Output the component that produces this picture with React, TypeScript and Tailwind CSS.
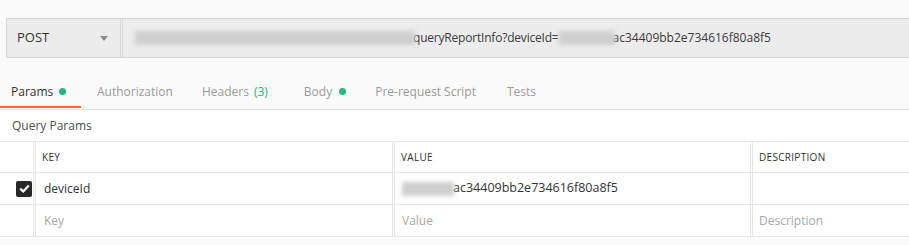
import React from "react";

const Blur = ({ w, className = "" }: { w: number; className?: string }) => (
  <span
    className={"inline-block h-[14px] bg-[#cfcfcf] blur-[2px] align-middle " + className}
    style={{ width: w }}
  />
);

export default function App() {
  return (
    <div
      className="w-[909px] h-[245px] overflow-hidden bg-[#fafafa] text-[#333]"
      style={{ fontFamily: '"Open Sans", "Noto Sans", sans-serif' }}
    >
      {/* URL bar */}
      <div className="pt-[18px] pl-[6px]">
        <div className="flex h-[40px] border border-[#d6d6d6] border-r-0 bg-[#ececec] rounded-l-[2px]">
          <div className="flex w-[116px] items-center justify-between border-r-[3px] border-double border-[#d8d8d8] pl-[10px] pr-[12px] text-[13px] text-[#333]">
            <span>POST</span>
            <svg width="8" height="5" viewBox="0 0 8 5">
              <path d="M0 0 L8 0 L4 5 Z" fill="#8a8a8a" />
            </svg>
          </div>
          <div className="flex flex-1 items-center pl-[12px] text-[12px] text-[#3a3a3a] whitespace-nowrap">
            <Blur w={280} />
            <span className="ml-[-2px] tracking-[-0.2px]">queryReportInfo?deviceId=</span>
            <Blur w={56} />
            <span className="ml-[-2px]">ac34409bb2e734616f80a8f5</span>
          </div>
        </div>
      </div>

      {/* Tabs */}
      <div className="mt-[15px] flex h-[37px] items-stretch border-b border-[#e3e3e3] pt-[1px] text-[12px] text-[#9a9a9a]">
        <div className="relative flex w-[82px] items-center pl-[11px] text-[#333]">
          Params
          <span className="ml-[6px] h-[7px] w-[7px] rounded-full bg-[#26b47f]" />
          <span className="absolute bottom-[1px] left-0 h-[2px] w-[81px] bg-[#f26b3a]" />
        </div>
        <div className="flex items-center pl-[15px]">Authorization</div>
        <div className="flex items-center pl-[29px]">
          Headers <span className="ml-[5px] text-[#26b47f]">(3)</span>
        </div>
        <div className="flex items-center pl-[36px]">
          Body
          <span className="ml-[7px] h-[7px] w-[7px] rounded-full bg-[#26b47f]" />
        </div>
        <div className="flex items-center pl-[29px]">Pre-request Script</div>
        <div className="flex items-center pl-[31px]">Tests</div>
      </div>

      {/* Query Params */}
      <div className="flex h-[32px] items-center border-b border-[#e8e8e8] bg-white pl-[12px] text-[12px] text-[#505050]">
        Query Params
      </div>

      {/* Table */}
      <div className="bg-white text-[12px]">
        <div className="flex h-[31px] border-b border-[#e8e8e8] text-[10px] tracking-[0.3px] text-[#333]">
          <div className="w-[36px] border-r-[3px] border-double border-[#e4e4e4]" />
          <div className="flex w-[359px] items-center border-r-[3px] border-double border-[#e4e4e4] pl-[6px]">KEY</div>
          <div className="flex w-[358px] items-center border-r-[3px] border-double border-[#e4e4e4] pl-[6px]">VALUE</div>
          <div className="flex flex-1 items-center pl-[6px]">DESCRIPTION</div>
        </div>
        <div className="flex h-[32px] border-b border-[#e8e8e8] text-[#333]">
          <div className="flex w-[36px] items-center border-r-[3px] border-double border-[#e4e4e4] pl-[16px]">
            <span className="flex h-[16px] w-[16px] items-center justify-center rounded-[2px] bg-[#282828]">
              <svg width="11" height="9" viewBox="0 0 11 9">
                <path d="M1.2 4.6 L4.2 7.4 L9.8 1.4" fill="none" stroke="#fff" strokeWidth="2.2" />
              </svg>
            </span>
          </div>
          <div className="flex w-[359px] items-center border-r-[3px] border-double border-[#e4e4e4] pl-[8px]">deviceId</div>
          <div className="flex w-[358px] items-center border-r-[3px] border-double border-[#e4e4e4] pl-[7px] whitespace-nowrap">
            <Blur w={52} />
            <span className="ml-[-1px] text-[12.5px]">ac34409bb2e734616f80a8f5</span>
          </div>
          <div className="flex-1" />
        </div>
        <div className="flex h-[32px] border-b border-[#e8e8e8] text-[#a8a8a8]">
          <div className="w-[36px] border-r-[3px] border-double border-[#e4e4e4]" />
          <div className="flex w-[359px] items-center border-r-[3px] border-double border-[#e4e4e4] pl-[8px]">Key</div>
          <div className="flex w-[358px] items-center border-r-[3px] border-double border-[#e4e4e4] pl-[7px]">Value</div>
          <div className="flex flex-1 items-center pl-[6px]">Description</div>
        </div>
      </div>
    </div>
  );
}
